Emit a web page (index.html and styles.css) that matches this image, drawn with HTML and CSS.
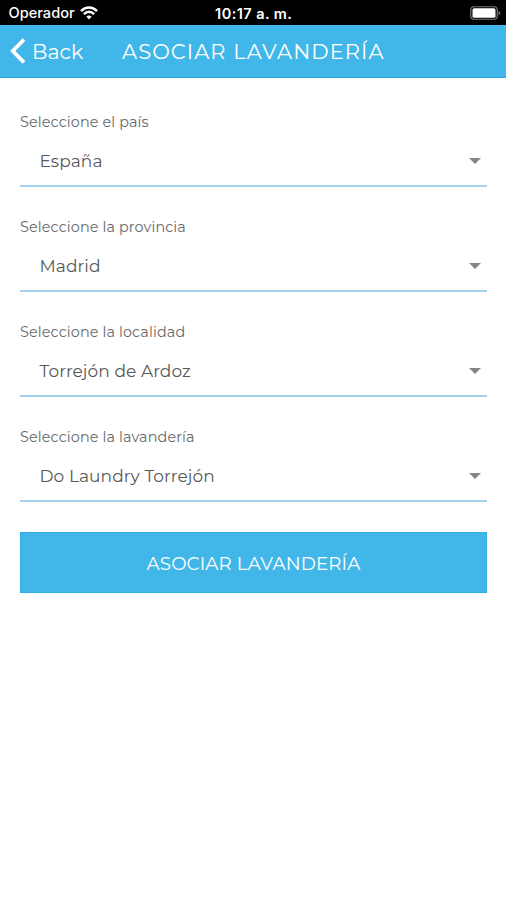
FILE: index.html
```html
<!DOCTYPE html>
<html lang="es">
<head>
<meta charset="utf-8">
<title>Asociar lavandería</title>
<link rel="stylesheet" href="styles.css">
</head>
<body>
<div class="status">
  <div class="carrier"><span class="operator">Operador</span>
    <svg class="wifi" width="18" height="14" viewBox="0 0 18 14" fill="none" stroke="#fff" stroke-width="2.5"><path d="M1 5.2C5.6.4 12.4.4 17 5.2M3.9 8.1c3-3 7.2-3 10.2 0"/><path d="M9 13.5 6.3 10.6q2.7-2.1 5.4 0z" fill="#fff" stroke="none"/></svg>
  </div>
  <div class="clock">10:17 a. m.</div>
  <svg class="battery" width="31" height="14" viewBox="0 0 31 14"><rect x=".75" y=".75" width="26.5" height="12.5" rx="3.2" fill="none" stroke="#777" stroke-width="1.2"/><rect x="2.5" y="2.2" width="23" height="9.6" rx="1.6" fill="#fff"/><path d="M28.6 4.7q3.2 2.3 0 4.6z" fill="#888"/></svg>
</div>
<header class="nav">
  <div class="back">
    <svg width="16" height="26" viewBox="0 0 16 26" fill="none" stroke="#fff" stroke-width="3.8"><path d="M15 1.6 3.8 13 15 24.4"/></svg>
    <span>Back</span>
  </div>
  <h1 class="title">ASOCIAR LAVANDERÍA</h1>
</header>
<main class="form">
  <div class="field"><div class="label">Seleccione el país</div><div class="select"><span>España</span><i class="caret"></i></div></div>
  <div class="field"><div class="label">Seleccione la provincia</div><div class="select"><span>Madrid</span><i class="caret"></i></div></div>
  <div class="field"><div class="label">Seleccione la localidad</div><div class="select"><span>Torrejón de Ardoz</span><i class="caret"></i></div></div>
  <div class="field"><div class="label">Seleccione la lavandería</div><div class="select"><span>Do Laundry Torrejón</span><i class="caret"></i></div></div>
  <button class="submit">ASOCIAR LAVANDERÍA</button>
</main>
</body>
</html>
```
FILE: styles.css
```css
* { box-sizing: border-box; }
body { margin: 0; background: #fff; min-height: 900px; font-family: Montserrat, Inter, sans-serif; color: #686868; }
.status { height: 25px; background: #000; color: #fff; display: grid; grid-template-columns: 1fr auto 1fr; align-items: center; padding: 1px 5px 0 8.5px; font-family: Inter, sans-serif; }
.carrier { display: flex; align-items: center; gap: 5px; font-size: 14.6px; font-weight: 500; }
.clock { font-size: 14.5px; font-weight: 600; letter-spacing: .45px; margin-left: -2px; }
.battery { justify-self: end; }
.nav { height: 53px; background: #41b6e8; border-bottom: 1px solid #2ba8df; color: #fff; display: flex; align-items: center; padding-left: 9px; }
.back { display: flex; align-items: center; gap: 7px; width: 113px; font-size: 20.5px; }
.title { margin: 0; font-size: 21px; font-weight: 400; letter-spacing: 1.08px; white-space: nowrap; }
.form { padding: 33px 19px 0 20px; }
.field { height: 105px; }
.field:last-of-type { height: 106px; }
.label { height: 20px; line-height: 20px; padding-top: 1px; font-size: 14.4px; font-weight: 400; letter-spacing: .12px; white-space: nowrap; }
.select { height: 55px; display: flex; align-items: center; justify-content: space-between; padding: 6px 6px 0 19.5px; border-bottom: 2px solid #a4d2ee; color: #585858; font-size: 17px; font-weight: 400; letter-spacing: .08px; white-space: nowrap; }
.label + .select { height: 56px; }
.caret { border: 6px solid transparent; border-top-color: #858585; border-bottom: 0; }
.submit { display: block; width: 100%; height: 61px; border: 1px solid #32ade2; background: #41b6e8; color: #fff; font-family: inherit; font-size: 18.3px; font-weight: 400; letter-spacing: .12px; padding: 2px 0 0; }
```
